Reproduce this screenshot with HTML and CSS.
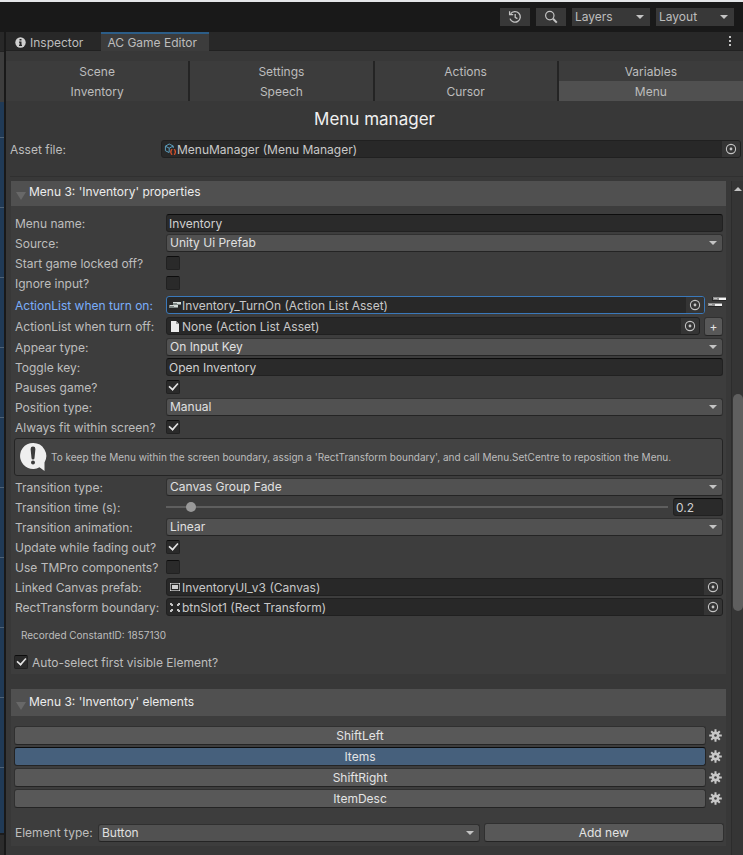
FILE: index.html
```html
<!DOCTYPE html>
<html lang="en">
<head>
  <meta charset="utf-8">
  <title>AC Game Editor</title>
  <link rel="stylesheet" href="styles.css">
</head>
<body>
  <!-- Shared icons -->
  <svg class="icon-defs" aria-hidden="true">
    <symbol id="icon-picker" viewBox="0 0 12 12">
      <circle cx="6" cy="6" r="4.6" fill="none" stroke="#c4c4c4" stroke-width="1.1"/>
      <circle cx="6" cy="6" r="1.4" fill="#c4c4c4"/>
    </symbol>
    <symbol id="icon-gear" viewBox="0 0 13 13">
      <g stroke="#c8c8c8" stroke-width="2">
        <path d="M6.5 .2v12.6M.2 6.5h12.6" />
        <path d="M2.2 2.2l8.6 8.6M10.8 2.2l-8.6 8.6"/>
      </g>
      <circle cx="6.5" cy="6.5" r="3.9" fill="#c8c8c8"/>
      <circle cx="6.5" cy="6.5" r="1.3" fill="#3d3d3d"/>
    </symbol>
  </svg>

  <header class="toolbar">
    <button class="tool-button" aria-label="Undo history">
      <svg width="14" height="14" viewBox="0 0 14 14" fill="none" stroke="#c4c4c4" stroke-width="1.3">
        <path d="M2.6 3.9A5.3 5.3 0 1 1 2 8.6"/>
        <path d="M1.6 1.2v3.4h3.6"/>
        <path d="M7.2 4v3.4l2.2 1.2"/>
      </svg>
    </button>
    <button class="tool-button" aria-label="Search">
      <svg width="14" height="14" viewBox="0 0 14 14" fill="none" stroke="#c4c4c4">
        <circle cx="5.8" cy="5.6" r="4.2" stroke-width="1.2"/>
        <path d="M9 8.8l3.8 3.8" stroke-width="2"/>
      </svg>
    </button>
    <div class="dropdown tool-dropdown">
      <select aria-label="Layers"><option>Layers</option></select>
    </div>
    <div class="dropdown tool-dropdown">
      <select aria-label="Layout"><option>Layout</option></select>
    </div>
  </header>

  <div class="workspace">
    <div class="neighbour">
      <div class="neighbour-tab"></div>
      <div class="neighbour-bar"></div>
      <div class="neighbour-rows"></div>
      <div class="neighbour-foot"></div>
    </div>

    <main class="window">
      <nav class="window-tabs">
        <button class="window-tab">
          <svg width="11" height="11" viewBox="0 0 11 11">
            <circle cx="5.5" cy="5.5" r="5.2" fill="#d0d0d0"/>
            <path d="M4.5 1.9h2v1.6h-2zM4 4.6h2.5v3.2H7V9H4V7.8h.6v-2H4z" fill="#282828"/>
          </svg>
          Inspector
        </button>
        <button class="window-tab active">AC Game Editor</button>
        <button class="window-menu" aria-label="Window options"><i></i><i></i><i></i></button>
      </nav>

      <nav class="managers">
        <button>Scene</button>
        <button>Settings</button>
        <button>Actions</button>
        <button>Variables</button>
        <button>Inventory</button>
        <button>Speech</button>
        <button>Cursor</button>
        <button class="active">Menu</button>
      </nav>

      <h1>Menu manager</h1>

      <div class="asset-row">
        <label for="asset-file">Asset file:</label>
        <div class="object-field">
          <svg width="12" height="12" viewBox="0 0 12 12" fill="none">
            <path d="M5 9.5L1.4 7.7V3.2L5.2 1l4 2v2M1.4 3.2L5.2 5.2l4-2.2M5.2 5.2V9.5" stroke="#5c9fc0"/>
            <path d="M8.3 6.5q-1.3 0-1.2 1.3t-.9 1.2q1 0 .9 1.1t1.2 1.3M9.9 6.5q1.3 0 1.2 1.3t.9 1.2q-1 0-.9 1.1t-1.2 1.3" stroke="#e8562c" stroke-width="1.2"/>
          </svg>
          <input id="asset-file" type="text" value="MenuManager (Menu Manager)" readonly>
          <button aria-label="Pick asset"><svg><use href="#icon-picker"/></svg></button>
        </div>
      </div>

      <div class="scroll-view">
        <div class="panels">
          <section class="panel">
            <h2>Menu 3: 'Inventory' properties</h2>
            <div class="panel-body">
              <div class="row">
                <label for="menu-name">Menu name:</label>
                <input id="menu-name" class="text-field" type="text" value="Inventory">
              </div>
              <div class="row">
                <label for="source">Source:</label>
                <div class="dropdown"><select id="source"><option>Unity Ui Prefab</option></select></div>
              </div>
              <div class="row">
                <label for="locked-off">Start game locked off?</label>
                <input id="locked-off" type="checkbox">
              </div>
              <div class="row">
                <label for="ignore-input">Ignore input?</label>
                <input id="ignore-input" type="checkbox">
              </div>
              <div class="row action-row selected">
                <label for="turn-on">ActionList when turn on:</label>
                <div class="object-field">
                  <svg width="12" height="12" viewBox="0 0 12 12">
                    <path d="M4 3h8v3H4zM0 6h9v3H0z" fill="#7e8784"/>
                    <path d="M4 3h8v1H4zM8 4h4v1H8zM1 6h8v1H1zM5 7h4v1H5z" fill="#d4dad7"/>
                  </svg>
                  <input id="turn-on" type="text" value="Inventory_TurnOn (Action List Asset)" readonly>
                  <button aria-label="Pick action list"><svg><use href="#icon-picker"/></svg></button>
                </div>
                <button class="nodes-button" aria-label="Edit action list">
                  <svg width="18" height="12" viewBox="0 0 18 12">
                    <path d="M4 1h14v4H4zM0 7h14v4H0z" fill="#262626"/>
                    <path d="M5 1h13v3H5zM0 7h14v3H0z" fill="#8f8f8f"/>
                    <path d="M11 2h7v2h-7zM7 8h7v2H7z" fill="#f4f4f4"/>
                    <path d="M1 8h3v1H1zM6 2h3v1H6z" fill="#c5c5c5"/>
                  </svg>
                </button>
              </div>
              <div class="row action-row">
                <label for="turn-off">ActionList when turn off:</label>
                <div class="object-field">
                  <svg width="12" height="12" viewBox="0 0 12 12">
                    <path d="M2 1h5l3 3v8H2z" fill="#ececec"/>
                    <path d="M7 1v3h3z" fill="#9a9a9a"/>
                  </svg>
                  <input id="turn-off" type="text" value="None (Action List Asset)" readonly>
                  <button aria-label="Pick action list"><svg><use href="#icon-picker"/></svg></button>
                </div>
                <button class="button add-button">+</button>
              </div>
              <div class="row">
                <label for="appear-type">Appear type:</label>
                <div class="dropdown"><select id="appear-type"><option>On Input Key</option></select></div>
              </div>
              <div class="row">
                <label for="toggle-key">Toggle key:</label>
                <input id="toggle-key" class="text-field" type="text" value="Open Inventory">
              </div>
              <div class="row">
                <label for="pauses-game">Pauses game?</label>
                <input id="pauses-game" type="checkbox" checked>
              </div>
              <div class="row">
                <label for="position-type">Position type:</label>
                <div class="dropdown"><select id="position-type"><option>Manual</option></select></div>
              </div>
              <div class="row">
                <label for="always-fit">Always fit within screen?</label>
                <input id="always-fit" type="checkbox" checked>
              </div>
              <div class="help-box">
                <svg width="28" height="30" viewBox="0 0 28 30">
                  <path d="M14 1a13 13 0 1 0 6.5 24.3L25.5 29V20.500A13 13 0 0 0 14 1z" fill="#efefef"/>
                  <path d="M11.6 7a2.4 2.4 0 0 1 4.8 0l-.9 9a1.5 1.5 0 0 1-3 0z" fill="#3c3c3c"/>
                  <circle cx="14" cy="20.5" r="2" fill="#3c3c3c"/>
                </svg>
                <p>To keep the Menu within the screen boundary, assign a 'RectTransform boundary', and call Menu.SetCentre to reposition the Menu.</p>
              </div>
              <div class="row">
                <label for="transition-type">Transition type:</label>
                <div class="dropdown"><select id="transition-type"><option>Canvas Group Fade</option></select></div>
              </div>
              <div class="row">
                <label for="transition-time">Transition time (s):</label>
                <input id="transition-time" type="range" min="0" max="5" step="0.1" value="0.2">
                <input class="text-field number-field" type="text" value="0.2" aria-label="Transition time value">
              </div>
              <div class="row">
                <label for="transition-animation">Transition animation:</label>
                <div class="dropdown"><select id="transition-animation"><option>Linear</option></select></div>
              </div>
              <div class="row">
                <label for="update-fading">Update while fading out?</label>
                <input id="update-fading" type="checkbox" checked>
              </div>
              <div class="row">
                <label for="use-tmpro">Use TMPro components?</label>
                <input id="use-tmpro" type="checkbox">
              </div>
              <div class="row">
                <label for="canvas-prefab">Linked Canvas prefab:</label>
                <div class="object-field">
                  <svg width="12" height="12" viewBox="0 0 12 12">
                    <path d="M1.5 2.5h9v7h-9z" fill="none" stroke="#9a9a9a"/>
                    <path d="M3 4h6v4H3z" fill="#d0d0d0"/>
                    <path d="M1 2h1v1H1zM10 2h1v1h-1zM1 9h1v1H1zM10 9h1v1h-1z" fill="#d4d4d4"/>
                  </svg>
                  <input id="canvas-prefab" type="text" value="InventoryUI_v3 (Canvas)" readonly>
                  <button aria-label="Pick canvas"><svg><use href="#icon-picker"/></svg></button>
                </div>
              </div>
              <div class="row">
                <label for="rect-boundary">RectTransform boundary:</label>
                <div class="object-field">
                  <svg width="12" height="12" viewBox="0 0 12 12" fill="#c4c4c4">
                    <path d="M1 2h2v1h1v2H2V4H1zM11 2H9v1H8v2h2V4h1zM1 11h2v-1h1V8H2v1H1zM11 11H9v-1H8V8h2v1h1z"/>
                  </svg>
                  <input id="rect-boundary" type="text" value="btnSlot1 (Rect Transform)" readonly>
                  <button aria-label="Pick rect transform"><svg><use href="#icon-picker"/></svg></button>
                </div>
              </div>
              <p class="constant-id">Recorded ConstantID: 1857130</p>
              <div class="check-row">
                <input id="auto-select" type="checkbox" checked>
                <label for="auto-select">Auto-select first visible Element?</label>
              </div>
            </div>
          </section>

          <section class="panel">
            <h2 class="elements-title">Menu 3: 'Inventory' elements</h2>
            <div class="elements">
              <div class="element">
                <button class="button">ShiftLeft</button>
                <button class="gear" aria-label="ShiftLeft options"><svg><use href="#icon-gear"/></svg></button>
              </div>
              <div class="element">
                <button class="button active">Items</button>
                <button class="gear" aria-label="Items options"><svg><use href="#icon-gear"/></svg></button>
              </div>
              <div class="element">
                <button class="button">ShiftRight</button>
                <button class="gear" aria-label="ShiftRight options"><svg><use href="#icon-gear"/></svg></button>
              </div>
              <div class="element">
                <button class="button">ItemDesc</button>
                <button class="gear" aria-label="ItemDesc options"><svg><use href="#icon-gear"/></svg></button>
              </div>
            </div>
            <div class="new-element">
              <label for="element-type">Element type:</label>
              <div class="dropdown"><select id="element-type"><option>Button</option></select></div>
              <button class="button">Add new</button>
            </div>
          </section>
        </div>

        <div class="scrollbar">
          <div class="scroll-arrow"></div>
          <div class="scroll-before"></div>
          <div class="scroll-thumb"></div>
          <div class="scroll-after"></div>
        </div>
      </div>
    </main>
  </div>
</body>
</html>
```
FILE: styles.css
```css
* {
  box-sizing: border-box;
}
body {
  margin: 0;
  min-height: 100vh;
  display: flex;
  flex-direction: column;
  background-color: #191919;
  border-top: 2px solid #e4e6e8;
  color: #bdbdbd;
  font-family: Inter, sans-serif;
  font-size: 12px;
  line-height: 16px;
}
button,
input,
select {
  margin: 0;
  padding: 0;
  border: none;
  background: none;
  color: inherit;
  font: inherit;
}
h1,
h2,
p {
  margin: 0;
  font-weight: normal;
}
svg {
  display: block;
  flex-shrink: 0;
}
.icon-defs {
  display: none;
}

/* Top toolbar */
.toolbar {
  display: flex;
  justify-content: flex-end;
  gap: 6px;
  padding: 6px 9px;
}
.tool-button {
  display: flex;
  align-items: center;
  justify-content: center;
  width: 30px;
  height: 18px;
  background-color: #383838;
}
.toolbar .tool-dropdown {
  flex: none;
  width: 78px;
}

/* Edge of the window docked to the left */
.workspace {
  flex: 1;
  display: flex;
  gap: 2px;
}
.neighbour {
  width: 4px;
  display: flex;
  flex-direction: column;
}
.neighbour-tab {
  height: 19px;
  background-color: #282828;
}
.neighbour-bar {
  height: 51px;
  background-color: #3d3d3d;
  border-top: 1px solid #222;
}
.neighbour-rows {
  flex: 1;
  background: #203a56 repeating-linear-gradient(#203a56 0 35px, #4d6175 35px 36px, #203a56 36px 70px);
}
.neighbour-foot {
  height: 23px;
  background-color: #2c2c2c;
  border-top: 2px solid #1c1c1c;
}

/* Editor window */
.window {
  flex: 1;
  min-width: 0;
  display: flex;
  flex-direction: column;
  background-color: #383838;
  border-bottom: 1px solid #242424;
}
.window-tabs {
  display: flex;
  height: 19px;
  background-color: #282828;
  border-bottom: 1px solid #212121;
}
.window-tab {
  display: flex;
  align-items: center;
  gap: 4px;
  height: 19px;
  padding: 2px 18px 0 9px;
}
.window-tab.active {
  padding: 0 12px 0 6px;
  background-color: #3c3c3c;
  border-top: 2px solid #2c5d87;
}
.window-menu {
  display: flex;
  flex-direction: column;
  align-items: center;
  justify-content: center;
  gap: 2px;
  width: 26px;
  margin-left: auto;
}
.window-menu i {
  width: 2px;
  height: 2px;
  background-color: #c4c4c4;
}
.managers {
  display: grid;
  grid-template-columns: repeat(4, 1fr);
  margin-top: 10px;
}
.managers button {
  height: 20px;
  padding-top: 2px;
  background-color: #3c3c3c;
  border-right: 2px solid #242424;
}
.managers button:nth-child(4n) {
  border-right: none;
}
.managers .active {
  background-color: #505050;
}
h1 {
  color: #f0f0f0;
  font-size: 17px;
  line-height: 36px;
  text-align: center;
}
.asset-row {
  display: grid;
  grid-template-columns: 151px 1fr;
  padding: 3px 2px 17px 4px;
  line-height: 18px;
}
.asset-row label {
  padding-top: 1px;
}

/* Controls */
.object-field {
  flex: 1;
  min-width: 0;
  height: 18px;
  display: flex;
  align-items: center;
  padding-left: 2px;
  background-color: #282828;
  border: 1px solid #202020;
  border-radius: 3px;
  overflow: hidden;
}
.object-field input {
  flex: 1;
  min-width: 0;
  height: 16px;
  padding: 1px 0 0 1px;
  color: #c8c8c8;
}
.object-field button {
  display: flex;
  align-items: center;
  justify-content: center;
  width: 18px;
  height: 16px;
  background-color: #353535;
}
.object-field button svg {
  width: 12px;
  height: 12px;
}
.text-field {
  flex: 1;
  min-width: 0;
  height: 18px;
  padding: 0 2px;
  background-color: #2a2a2a;
  border: 1px solid #212121;
  border-top-color: #0d0d0d;
  border-radius: 3px;
  color: #d0d0d0;
}
.dropdown {
  position: relative;
  flex: 1;
  min-width: 0;
}
.dropdown select {
  display: block;
  width: 100%;
  height: 18px;
  padding: 0 20px 1px 3px;
  appearance: none;
  background-color: #515151;
  border: 1px solid #303030;
  border-bottom-color: #242424;
  border-radius: 3px;
  color: #e0e0e0;
}
.dropdown::after {
  content: "";
  position: absolute;
  top: 7px;
  right: 6px;
  border: 4px solid transparent;
  border-top: 4px solid #c4c4c4;
  border-bottom: none;
  pointer-events: none;
}
.toolbar .dropdown select {
  background-color: #383838;
  border: none;
  border-radius: 0;
  color: #bdbdbd;
}
input[type="checkbox"] {
  appearance: none;
  display: flex;
  align-items: center;
  justify-content: center;
  width: 14px;
  height: 14px;
  background-color: #2a2a2a;
  border: 1px solid #212121;
  border-top-color: #0d0d0d;
  border-radius: 2px;
}
input[type="checkbox"]:checked::before {
  content: "";
  flex: none;
  width: 9px;
  height: 5px;
  margin-bottom: 3px;
  border: solid #e4e4e4;
  border-width: 0 0 2px 2px;
  transform: rotate(-48deg) scale(0.8);
}
input[type="range"] {
  appearance: none;
  flex: 1;
  min-width: 0;
  height: 18px;
  margin-right: 5px;
}
input[type="range"]::-webkit-slider-runnable-track {
  height: 2px;
  background-color: #5e5e5e;
}
input[type="range"]::-webkit-slider-thumb {
  appearance: none;
  width: 10px;
  height: 10px;
  margin-top: -4px;
  border-radius: 50%;
  background-color: #999;
}
.number-field {
  flex: 0 0 50px;
}
.button {
  height: 19px;
  background-color: #585858;
  border: 1px solid #303030;
  border-bottom-color: #242424;
  border-radius: 3px;
  color: #e4e4e4;
}
.button.active {
  background-color: #46607c;
  border-color: #242424;
  border-top-color: #0d0d0d;
}

/* Scroll view */
.scroll-view {
  flex: 1;
  display: flex;
  gap: 5px;
  margin-left: 4px;
  border-top: 1px solid #303030;
}
.panels {
  flex: 1;
  min-width: 0;
  display: flex;
  flex-direction: column;
  gap: 15px;
  padding: 4px 0 9px 1px;
}
.panel {
  background-color: #3d3d3d;
}
.panel h2 {
  display: flex;
  align-items: center;
  gap: 3px;
  padding: 2px 5px 6px;
  background-color: #505050;
  color: #ececec;
  font-size: 12px;
  line-height: 17px;
}
.panel .elements-title {
  padding-top: 4px;
}
.panel h2::before {
  content: "";
  margin-top: 8px;
  border: 5px solid transparent;
  border-top: 8px solid #686868;
  border-bottom: none;
}
.panel-body {
  display: flex;
  flex-direction: column;
  gap: 2px;
  padding: 8px 3px 3px 4px;
}
.row {
  display: flex;
  align-items: center;
  min-height: 18px;
}
.row label {
  flex: 0 0 151px;
  padding-top: 1px;
  white-space: nowrap;
}
.action-row {
  align-items: flex-start;
  min-height: 19px;
}
.action-row label {
  padding-top: 2px;
}
.action-row.selected {
  margin-top: 2px;
}
.selected label {
  color: #7baefa;
}
.selected .object-field {
  border-color: #3a79bb;
}
.nodes-button {
  margin: 0 -3px 0 3px;
}
.add-button {
  width: 19px;
  margin-left: 4px;
  line-height: 12px;
}
.help-box {
  display: flex;
  align-items: center;
  gap: 4px;
  min-height: 38px;
  margin-left: -1px;
  padding: 3px 4px;
  background-color: #434343;
  border: 1px solid #242424;
  border-radius: 3px;
  font-size: 10px;
  line-height: 14px;
}
.constant-id {
  padding: 10px 6px 4px;
  font-size: 10px;
  line-height: 14px;
}
.check-row {
  display: flex;
  align-items: center;
  gap: 4px;
  min-height: 18px;
  margin: 5px 0 0 -1px;
}
.check-row label {
  padding-top: 1px;
}

/* Elements list */
.elements {
  display: flex;
  flex-direction: column;
  gap: 2px;
  padding: 10px 4px 15px 3px;
}
.element {
  display: flex;
  align-items: center;
  gap: 3px;
}
.element .button {
  flex: 1;
}
.gear svg {
  width: 13px;
  height: 13px;
}
.new-element {
  display: flex;
  align-items: center;
  gap: 4px;
  padding: 0 2px 4px 4px;
}
.new-element label {
  flex: 0 0 79px;
}
.new-element .dropdown {
  flex: 8;
}
.new-element .button {
  flex: 5;
}

/* Scrollbar */
.scrollbar {
  width: 12px;
  display: flex;
  flex-direction: column;
  align-items: flex-end;
  margin-top: 4px;
  padding-top: 6px;
  background-color: #353535;
  border-left: 1px solid #2c2c2c;
}
.scroll-arrow {
  margin-right: 1px;
  border: 4px solid transparent;
  border-bottom: 4px solid #c4c4c4;
  border-top: none;
}
.scroll-before {
  flex: 203;
}
.scroll-thumb {
  flex: 216;
  width: 10px;
  border-radius: 5px;
  background-color: #5f5f5f;
}
.scroll-after {
  flex: 244;
}
```
